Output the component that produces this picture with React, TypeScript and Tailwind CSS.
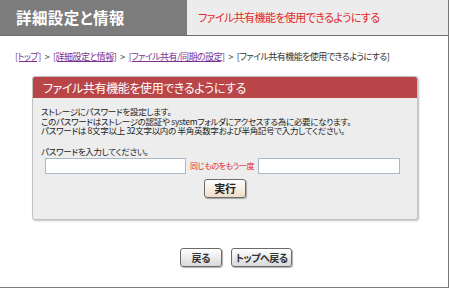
const jp = { fontFamily: '"Noto Sans CJK JP", "Noto Sans", sans-serif', fontFeatureSettings: '"palt"' }

export default function App() {
  return (
    <div className="w-[450px] h-[289px] bg-white" style={jp}>
      <div className="w-[449px] h-[288px] border-r border-b border-[#7a7a7a] flex flex-col">
        {/* header */}
        <div className="flex h-[36px] border-b border-[#6e6e6e]">
          <div className="w-[187px] bg-[#7c7c7c] text-white font-bold text-[15.5px] flex items-center pl-[16px] tracking-[0.4px]">
            詳細設定と情報
          </div>
          <div className="flex-1 bg-[#ececec] flex items-center pl-[11px] text-[11px] tracking-[-0.6px] text-[#e3262b]">
            ファイル共有機能を使用できるようにする
          </div>
        </div>

        {/* breadcrumb */}
        <div className="mt-[15px] pl-[15px] text-[9px] tracking-[-0.55px] leading-[12px] text-[#333] flex gap-[4px]">
          <a className="text-[#7d2f94] underline">[トップ]</a>
          <span>&gt;</span>
          <a className="text-[#7d2f94] underline">[詳細設定と情報]</a>
          <span>&gt;</span>
          <a className="text-[#7d2f94] underline">[ファイル共有/同期の設定]</a>
          <span>&gt;</span>
          <span>[ファイル共有機能を使用できるようにする]</span>
        </div>

        {/* panel */}
        <div className="ml-[32px] mt-[13px] w-[386px] rounded-[3px] border border-[#c2c2c2] shadow-[1px_1px_2px_rgba(0,0,0,0.25)] bg-[#ededed] overflow-hidden">
          <div className="h-[21px] bg-[#b94548] text-white text-[12px] tracking-[-0.4px] flex items-center pl-[10px]">
            ファイル共有機能を使用できるようにする
          </div>
          <div className="pl-[8px] pt-[9px] pb-[21px] text-[8.5px] tracking-[-0.3px] leading-[9.5px] text-[#222]">
            <p>ストレージにパスワードを設定します。</p>
            <p>このパスワードはストレージの認証や systemフォルダにアクセスする為に必要になります。</p>
            <p>パスワードは 8文字以上 32文字以内の 半角英数字および半角記号で入力してください。</p>
            <p className="mt-[11px]">パスワードを入力してください。</p>
            <div className="flex items-center mt-[2px] pl-[4px]">
              <input className="w-[141px] h-[16px] bg-white border border-[#a9b8c9] outline-none" />
              <span className="text-[#e3262b] text-[8px] tracking-[-0.4px] mx-[4px]">同じものをもう一度</span>
              <input className="w-[142px] h-[16px] bg-white border border-[#a9b8c9] outline-none" />
            </div>
            <div className="flex justify-center mt-[5px] pr-[8px]">
              <button className="w-[42px] h-[19px] rounded-[3px] border border-[#6b6b6b] bg-gradient-to-b from-[#ffffff] to-[#f0dcc6] text-[11px] font-bold text-[#222] flex items-center justify-center shadow-[1px_1px_1px_rgba(0,0,0,0.3)]">
                実行
              </button>
            </div>
          </div>
        </div>

        {/* footer buttons */}
        <div className="flex gap-[9px] pl-[180px] mt-[28px]">
          <button className="w-[42px] h-[19px] rounded-[3px] border border-[#6b6b6b] bg-gradient-to-b from-[#ffffff] to-[#d9d9d9] text-[10px] font-bold text-[#333] flex items-center justify-center shadow-[1px_1px_1px_rgba(0,0,0,0.3)]">
            戻る
          </button>
          <button className="w-[61px] h-[19px] rounded-[3px] border border-[#6b6b6b] bg-gradient-to-b from-[#ffffff] to-[#d9d9d9] text-[10px] font-bold text-[#333] flex items-center justify-center shadow-[1px_1px_1px_rgba(0,0,0,0.3)] tracking-[-0.5px]">
            トップへ戻る
          </button>
        </div>
      </div>
    </div>
  )
}
